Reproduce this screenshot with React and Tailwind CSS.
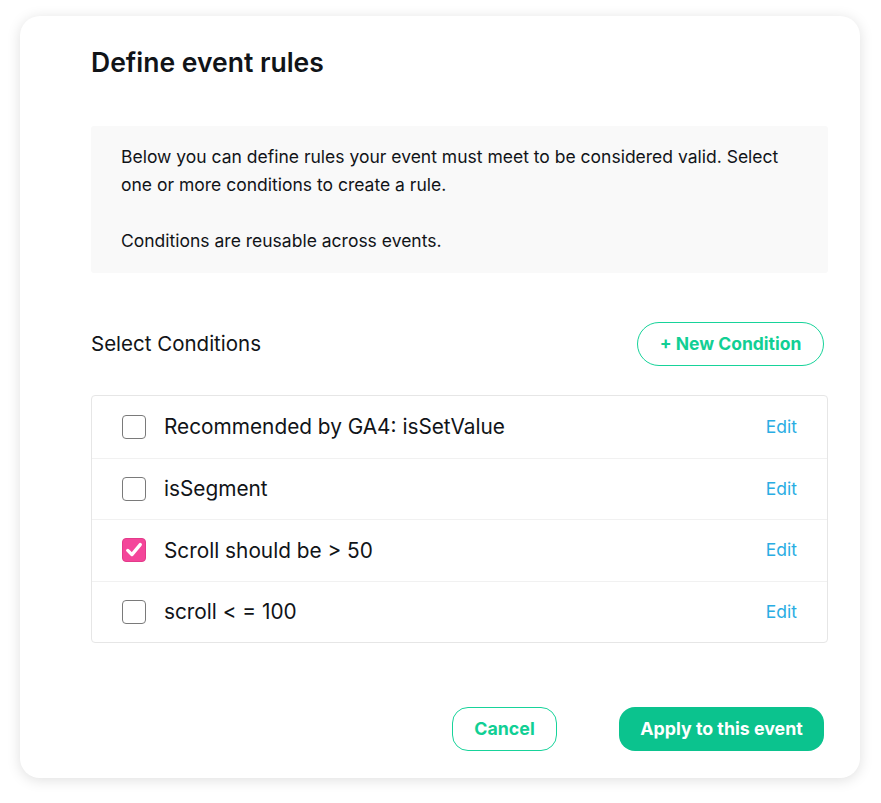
import { useState } from 'react';

const conditions = [
  { id: 1, label: 'Recommended by GA4: isSetValue', checked: false },
  { id: 2, label: 'isSegment', checked: false },
  { id: 3, label: 'Scroll should be > 50', checked: true },
  { id: 4, label: 'scroll < = 100', checked: false },
];

const Checkbox = ({ checked, onChange }) => (
  <button
    type="button"
    onClick={onChange}
    className={
      checked
        ? 'w-6 h-6 shrink-0 rounded-[4px] bg-[#f4469a] border border-[#e33b8a] flex items-center justify-center'
        : 'w-6 h-6 shrink-0 rounded-[4px] bg-white border-[1.5px] border-[#7a7a7a]'
    }
  >
    {checked && (
      <svg viewBox="0 0 24 24" className="w-5 h-5" fill="none" stroke="white" strokeWidth="4" strokeLinecap="round" strokeLinejoin="round">
        <path d="M4.5 12.5l5 5L19.5 5.5" />
      </svg>
    )}
  </button>
);

export default function App() {
  const [items, setItems] = useState(conditions);

  const toggle = (id) =>
    setItems((prev) => prev.map((c) => (c.id === id ? { ...c, checked: !c.checked } : c)));

  return (
    <div className="min-h-[803px] bg-white pt-4 px-5 pb-6 font-['Inter',sans-serif] text-[#111418]">
      <div className="w-[840px] h-[762px] bg-white rounded-[20px] shadow-[0_2px_14px_rgba(0,0,0,0.13)] pl-[71px] pr-8 pt-[30px] flex flex-col">
        <h1 className="text-[26.5px] font-semibold leading-[32px]">Define event rules</h1>

        <div className="mt-[48px] bg-[#f9f9f9] rounded-[3px] pl-[30px] pr-6 pt-[17px] pb-[18px] text-[17.5px] leading-[28px]">
          <p>
            Below you can define rules your event must meet to be considered valid. Select one or more conditions to
            create a rule.
          </p>
          <p className="mt-[28px]">Conditions are reusable across events.</p>
        </div>

        <div className="mt-[49px] flex items-center justify-between pr-1">
          <h2 className="text-[20.5px] leading-[24px]">Select Conditions</h2>
          <button
            type="button"
            className="w-[187px] h-[44px] rounded-[22px] border-[1.5px] border-[#17d39a] text-[#11cf94] text-[17.5px] font-bold"
          >
            + New Condition
          </button>
        </div>

        <div className="mt-[29px] border border-[#e6e6e6] rounded-[4px]">
          {items.map((c, i) => (
            <div
              key={c.id}
              className={
                'h-[61.5px] flex items-center pl-[30px] pr-[30px] ' + (i > 0 ? 'border-t border-[#f1f1f1]' : '')
              }
            >
              <Checkbox checked={c.checked} onChange={() => toggle(c.id)} />
              <span className="ml-[18px] text-[20.8px] flex-1">{c.label}</span>
              <button type="button" className="text-[#29ade3] text-[17.5px]">
                Edit
              </button>
            </div>
          ))}
        </div>

        <div className="mt-auto mb-[27px] flex justify-end items-center gap-[62px] pr-1">
          <button
            type="button"
            className="w-[105px] h-[44px] rounded-[16px] border-[1.5px] border-[#17d39a] text-[#11cf94] text-[17.8px] font-bold"
          >
            Cancel
          </button>
          <button
            type="button"
            className="w-[205px] h-[44px] rounded-[16px] bg-[#0bc38e] text-white text-[17.8px] font-bold"
          >
            Apply to this event
          </button>
        </div>
      </div>
    </div>
  );
}
